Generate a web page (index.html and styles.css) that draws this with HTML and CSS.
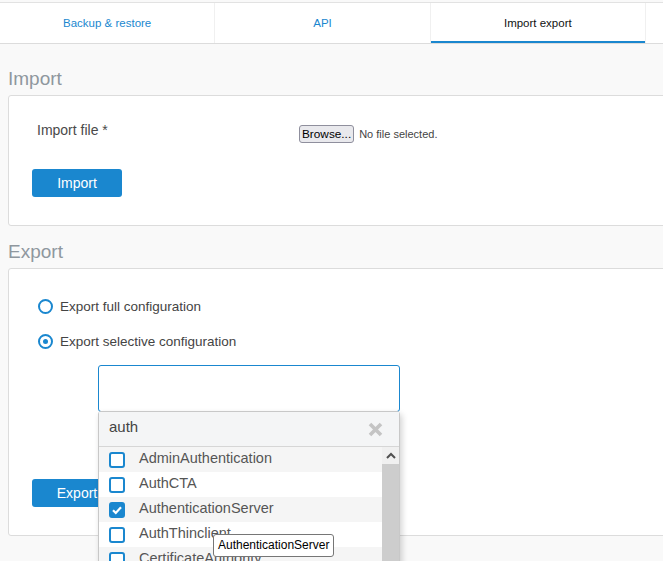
FILE: index.html
```html
<!DOCTYPE html>
<html lang="en">
<head>
<meta charset="utf-8">
<title>Import export</title>
<link rel="stylesheet" href="styles.css">
</head>
<body>
<nav class="tabs">
  <a class="tab">Backup &amp; restore</a>
  <a class="tab">API</a>
  <a class="tab active">Import export</a>
  <span class="tab-rest"></span>
</nav>
<main class="content">
  <section class="section">
    <h2 class="section-title">Import</h2>
    <div class="panel panel-import">
      <div class="form-row">
        <label class="field-label">Import file *</label>
        <div class="file-input">
          <span class="browse-btn">Browse...</span>
          <span class="file-name">No file selected.</span>
        </div>
      </div>
      <button class="btn">Import</button>
    </div>
  </section>
  <section class="section">
    <h2 class="section-title">Export</h2>
    <div class="panel panel-export">
      <label class="radio-row"><span class="radio"></span>Export full configuration</label>
      <label class="radio-row"><span class="radio checked"></span>Export selective configuration</label>
      <div class="multiselect">
        <div class="ms-box"></div>
        <div class="ms-dropdown">
          <div class="ms-search">
            <span class="ms-query">auth</span>
            <svg class="ms-clear" width="15" height="15" viewBox="0 0 15 15"><path d="M2 2 L13 13 M13 2 L2 13" stroke="#c4c4c4" stroke-width="3.6" fill="none"/></svg>
          </div>
          <div class="ms-body">
            <ul class="ms-list">
              <li class="ms-item"><span class="cb"></span><span class="ms-text">AdminAuthentication</span></li>
              <li class="ms-item"><span class="cb"></span><span class="ms-text">AuthCTA</span></li>
              <li class="ms-item"><span class="cb checked"><svg width="12" height="12" viewBox="0 0 12 12"><path d="M2 6.2 L4.8 9 L10 3.2" stroke="#fff" stroke-width="2.2" fill="none"/></svg></span><span class="ms-text">AuthenticationServer</span></li>
              <li class="ms-item"><span class="cb"></span><span class="ms-text">AuthThinclient</span></li>
              <li class="ms-item"><span class="cb"></span><span class="ms-text">CertificateAuthority</span></li>
            </ul>
            <div class="ms-scroll">
              <div class="ms-arrow"><svg width="10" height="7" viewBox="0 0 10 7"><path d="M1 6 L5 2 L9 6" stroke="#505050" stroke-width="2" fill="none"/></svg></div>
              <div class="ms-thumb"></div>
            </div>
          </div>
        </div>
      </div>
      <button class="btn btn-export">Export</button>
    </div>
  </section>
</main>
<div class="tooltip">AuthenticationServer</div>
</body>
</html>
```

FILE: styles.css
```css
* { box-sizing: border-box; }
html, body { margin: 0; padding: 0; overflow: hidden; }
body {
  background: #f9f9f9;
  font-family: "Liberation Sans", Arial, sans-serif;
  color: #444;
  width: 663px;
  height: 561px;
  position: relative;
}
.tabs {
  display: flex;
  margin-top: 2px;
  height: 42px;
  background: #fff;
  border-top: 1px solid #e2e2e2;
  border-bottom: 1px solid #dcdcdc;
}
.tab {
  flex: none;
  width: 215.33px;
  border-right: 1px solid #f0f0f0;
  display: flex;
  align-items: center;
  justify-content: center;
  font-size: 11.5px;
  color: #1a87cf;
}
.tab.active {
  color: #111;
  box-shadow: inset 0 -2px 0 #1a87cf;
}
.tab-rest { flex: 1; }
.content { padding: 24px 0 0 8px; }
.section-title {
  margin: 0 0 5px;
  font-size: 19px;
  line-height: 22px;
  font-weight: normal;
  color: #8f979e;
}
.panel {
  background: #fff;
  border: 1px solid #dcdcdc;
  border-radius: 3px;
  width: calc(100% + 20px);
}
.panel-import { padding: 24px 23px 28px; margin-bottom: 15px; }
.form-row { display: flex; height: 24px; }
.field-label {
  margin-left: 5px;
  width: 262px;
  font-size: 14px;
  line-height: 20px;
  color: #4a4a4a;
}
.file-input {
  display: flex;
  align-items: center;
  gap: 5px;
  margin-top: 5px;
  height: 18px;
}
.browse-btn {
  height: 18px;
  line-height: 16px;
  padding: 0 2px;
  border: 1px solid #8f8f9d;
  border-radius: 3px;
  background: #e9e9ed;
  font-size: 11.8px;
  color: #000;
}
.file-name { font-size: 11px; color: #444; }
.btn {
  display: block;
  width: 90px;
  height: 28px;
  margin-top: 25px;
  padding: 0;
  border: 0;
  border-radius: 3px;
  background: #1a87cf;
  color: #fff;
  font-family: "Liberation Sans", Arial, sans-serif;
  font-size: 14px;
}
.panel-export { padding: 27px 23px 28px; }
.radio-row {
  display: flex;
  align-items: center;
  gap: 7px;
  height: 20px;
  margin-left: 6px;
  margin-bottom: 15px;
  font-size: 13.5px;
  color: #444;
}
.radio-row + .radio-row { margin-bottom: 14px; }
.radio {
  width: 15px;
  height: 15px;
  border: 2px solid #1a87cf;
  border-radius: 50%;
  display: flex;
  align-items: center;
  justify-content: center;
}
.radio.checked::after {
  content: "";
  width: 5px;
  height: 5px;
  border-radius: 50%;
  background: #1a87cf;
}
.multiselect { position: relative; margin-left: 66px; width: 302px; }
.ms-box {
  height: 47px;
  border: 1px solid #1a87cf;
  border-radius: 3px;
  background: #fff;
}
.ms-dropdown {
  position: absolute;
  left: 0;
  top: 46px;
  width: 302px;
  z-index: 5;
  background: #fff;
  border: 1px solid #c8c8c8;
  border-radius: 3px 3px 0 0;
  box-shadow: 2px 3px 6px rgba(0, 0, 0, 0.18);
}
.ms-search {
  height: 35px;
  display: flex;
  align-items: center;
  justify-content: space-between;
  padding: 0 16px 0 10px;
  background: #f4f5f6;
  border-bottom: 1px solid #d6d6d6;
  font-size: 15px;
  color: #444;
}
.ms-query { padding-bottom: 5px; }
.ms-clear { display: block; }
.ms-body { display: flex; height: 125px; }
.ms-list { flex: 1; margin: 0; padding: 0; list-style: none; }
.ms-item {
  display: flex;
  align-items: center;
  gap: 14px;
  height: 25px;
  padding-left: 10px;
  font-size: 14.5px;
  color: #555;
}
.ms-text { padding-bottom: 4px; }
.ms-item:nth-child(odd) { background: #f5f5f5; }
.cb {
  width: 16px;
  height: 16px;
  border: 2px solid #1a87cf;
  border-radius: 3px;
  background: #fff;
  display: flex;
  align-items: center;
  justify-content: center;
}
.cb.checked { background: #1a87cf; }
.cb svg { display: block; }
.ms-scroll { width: 17px; display: flex; flex-direction: column; }
.ms-arrow {
  height: 17px;
  background: #f0f0f0;
  display: flex;
  align-items: center;
  justify-content: center;
}
.ms-arrow svg { display: block; }
.ms-thumb { flex: 1; background: #cdcdcd; }
.btn-export { margin-top: 67px; }
.tooltip {
  position: absolute;
  left: 213px;
  top: 534px;
  z-index: 10;
  padding: 1px 4px;
  line-height: 19px;
  font-size: 12px;
  color: #000;
  background: #fff;
  border: 1px solid #767676;
  border-radius: 3px;
}
```
